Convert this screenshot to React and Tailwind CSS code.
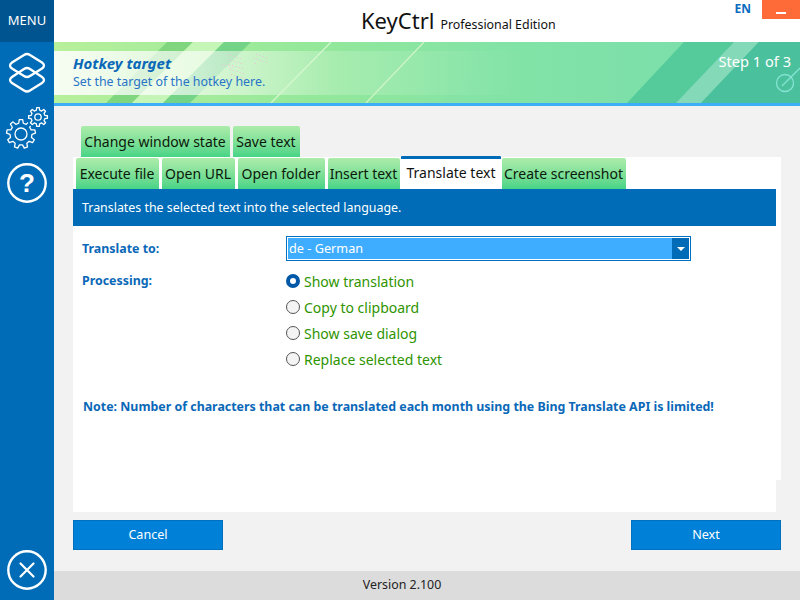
import React from "react";

const FONT = "font-['Noto_Sans','Open_Sans',sans-serif]";

function gearPath(cx, cy, ro, ri, teeth) {
  const pts = [];
  const step = (Math.PI * 2) / teeth;
  for (let i = 0; i < teeth; i++) {
    const a = i * step - Math.PI / 2;
    const w = step * 0.17;
    const v = step * 0.3;
    const p = (r, t) => `${(cx + r * Math.cos(t)).toFixed(2)} ${(cy + r * Math.sin(t)).toFixed(2)}`;
    pts.push(p(ri, a - v), p(ro, a - w), p(ro, a + w), p(ri, a + v));
  }
  return "M" + pts.join("L") + "Z";
}

function LayersIcon() {
  return (
    <svg width="54" height="50" viewBox="0 0 54 50" fill="none" stroke="#fff" strokeWidth="2.3" className="block">
      <path d="M24 3Q27 1 30 3L42 10.5Q46 13.5 42 16.5L30 24Q27 26 24 24L12 16.5Q8 13.5 12 10.5Z" />
      <path d="M24 17Q27 15 30 17L42 25Q46 28 42 31L30 38.5Q27 40.5 24 38.5L12 31Q8 28 12 25Z" />
    </svg>
  );
}

function GearsIcon() {
  return (
    <svg width="54" height="46" viewBox="0 0 54 46" fill="none" stroke="#fff" strokeWidth="1.3" strokeLinejoin="round" className="block">
      <path d={gearPath(21, 28, 14.5, 11, 9)} />
      <circle cx="21" cy="28" r="6" />
      <circle cx="38" cy="11" r="11.5" fill="#006cb7" stroke="none" />
      <path d={gearPath(38, 11, 9.5, 7, 8)} />
      <circle cx="38" cy="11" r="3.2" />
    </svg>
  );
}

function HelpIcon() {
  return (
    <svg width="54" height="42" viewBox="0 0 54 42" fill="none" className="block">
      <circle cx="27" cy="21" r="18.7" stroke="#fff" strokeWidth="2.4" />
      <text x="27" y="30" textAnchor="middle" fill="#fff" fontSize="26" fontWeight="700" fontFamily="Liberation Sans, sans-serif">?</text>
    </svg>
  );
}

function CloseIcon() {
  return (
    <svg width="54" height="42" viewBox="0 0 54 42" fill="none" className="block">
      <circle cx="27" cy="21" r="18.7" stroke="#fff" strokeWidth="2.4" />
      <path d="M20.5 14.5L33.5 27.5M33.5 14.5L20.5 27.5" stroke="#fff" strokeWidth="2.2" strokeLinecap="round" />
    </svg>
  );
}

function BannerArt() {
  const dots = [];
  for (let i = 0; i < 40; i++) {
    const x = 165 + ((i * 37) % 36) + (i % 5) * 3;
    const y = 12 + ((i * 53) % 26);
    dots.push(<rect key={i} x={x - (y - 12) * 0.8 + 8} y={y} width="1" height="1" fill="#f0bcdc" />);
  }
  return (
    <svg width="746" height="61" viewBox="0 0 746 61" className="absolute left-0 top-0">
      <defs>
        <linearGradient id="base" x1="0" x2="1" y1="0" y2="0">
          <stop offset="0" stopColor="#b8f09b" />
          <stop offset="0.35" stopColor="#93e89a" />
          <stop offset="0.65" stopColor="#7fe2a9" />
          <stop offset="0.85" stopColor="#74d9ae" />
          <stop offset="1" stopColor="#72d8ae" />
        </linearGradient>
        <linearGradient id="band" x1="0" x2="1" y1="0" y2="0">
          <stop offset="0" stopColor="#fff" stopOpacity="0.88" />
          <stop offset="0.3" stopColor="#fff" stopOpacity="0.62" />
          <stop offset="0.6" stopColor="#fff" stopOpacity="0.2" />
          <stop offset="1" stopColor="#fff" stopOpacity="0" />
        </linearGradient>
      </defs>
      <rect width="746" height="61" fill="url(#base)" />
      <path d="M113 0H139L78 61H52Z" fill="#7fd67f" />
      <path d="M139 0H170L109 61H78Z" fill="#c6f5b8" />
      <path d="M170 0H197L136 61H109Z" fill="#73d488" />
      <path d="M445 0L386 61H746V0Z" fill="#84e4a6" opacity="0.5" />
      <path d="M630 0H746V61H573Z" fill="#55cb9c" />
      <path d="M680 0H705L647 61H622Z" fill="#84d9b8" />
      <path d="M705 0H746V61H647Z" fill="#4ac09c" />
      <rect y="9" width="470" height="44" fill="url(#band)" />
      <path d="M277 0L217 61" stroke="#d8f8d0" strokeWidth="1.2" />
      <path d="M370 0L312 61" stroke="#d2f5c8" strokeWidth="1.2" />
      {dots}
      <circle cx="731" cy="41" r="8.5" fill="none" stroke="#86e3d3" strokeWidth="1.3" />
      <path d="M728 44L746 26" stroke="#86e3d3" strokeWidth="1.3" />
    </svg>
  );
}

function Tab({ w, children, active }) {
  if (active) {
    return (
      <div className={`${w} h-[33px] pb-[3px] bg-white border-t-[3px] border-[#006cb7] flex items-center justify-center text-[14px] text-[#111] rounded-t-[1px] whitespace-nowrap`}>
        {children}
      </div>
    );
  }
  return (
    <div className={`${w} h-[31px] pr-[1px] bg-gradient-to-b from-[#acecaa] to-[#45d487] flex items-center justify-center text-[14px] text-[#0a1a0a] rounded-t-[2px] whitespace-nowrap`}>
      {children}
    </div>
  );
}

function Radio({ checked, label }) {
  return (
    <div className="flex items-center h-[26px]">
      {checked ? (
        <span className="w-[14px] h-[14px] rounded-full border-[4px] border-[#0058a8] bg-white shrink-0" />
      ) : (
        <span className="w-[14px] h-[14px] rounded-full border border-[#555] bg-[#f4f4f4] shrink-0" />
      )}
      <span className="ml-[4px] text-[14px] text-[#2f9400] whitespace-nowrap">{label}</span>
    </div>
  );
}

export default function App() {
  return (
    <div className={`${FONT} w-[800px] h-[600px] flex overflow-hidden bg-[#f2f2f2]`}>
      <aside className="w-[54px] h-full bg-[#006cb7] flex flex-col text-white shrink-0">
        <div className="h-[42px] bg-[#00548f] flex items-center justify-center text-[13px]">MENU</div>
        <div className="mt-[10px]"><LayersIcon /></div>
        <div className="mt-[4px]"><GearsIcon /></div>
        <div className="mt-[10px]"><HelpIcon /></div>
        <div className="mt-auto mb-[9px]"><CloseIcon /></div>
      </aside>

      <main className="flex-1 flex flex-col min-w-0">
        <header className="h-[42px] bg-white flex items-start relative">
          <div className="flex-1 flex items-baseline pl-[307px] pt-[3px]">
            <span className="text-[22px] leading-[34px] text-[#111]">KeyCtrl</span>
            <span className="ml-[6px] text-[12.4px] text-[#111]">Professional Edition</span>
          </div>
          <span className="mt-[1px] mr-[11px] text-[12px] font-bold text-[#0a6cc0] leading-[16px]">EN</span>
          <div className="w-[38px] h-[19px] bg-[#ff6a39] flex items-end justify-center pb-[5px]">
            <span className="w-[10px] h-[2px] bg-white" />
          </div>
        </header>

        <section className="h-[64px] relative border-b-[3px] border-[#3dadf5] shrink-0">
          <BannerArt />
          <div className="relative flex justify-between pl-[19px] pr-[9px]">
            <div className="pt-[11px]">
              <div className="text-[15px] leading-[20px] font-bold italic text-[#0a68b8]">Hotkey target</div>
              <div className="text-[12.4px] leading-[18px] text-[#2a74c8]">Set the target of the hotkey here.</div>
            </div>
            <div className="pt-[9px] text-[14.6px] leading-[20px] text-white">Step 1 of 3</div>
          </div>
        </section>

        <div className="flex-1 pl-[19px] pt-[20px] flex flex-col">
          <div className="flex gap-[3px] pl-[8px] h-[31px]">
            <Tab w="w-[149px]">Change window state</Tab>
            <Tab w="w-[67px]">Save text</Tab>
          </div>
          <div className="w-[708px] h-[323px] bg-white relative">
            <div className="flex items-end h-[32px] pl-[3px]">
              <Tab w="w-[83px] mr-[3px]">Execute file</Tab>
              <Tab w="w-[73px] mr-[3px]">Open URL</Tab>
              <Tab w="w-[87px] mr-[3px]">Open folder</Tab>
              <Tab w="w-[72px] mr-[1px]">Insert text</Tab>
              <Tab w="w-[100px] mr-[1px]" active>Translate text</Tab>
              <Tab w="w-[124px]">Create screenshot</Tab>
            </div>
            <div className="w-[703px] h-[37px] bg-[#006cb7] flex items-center pl-[9px] pt-[1px] text-[12.4px] text-white">
              Translates the selected text into the selected language.
            </div>
            <div className="flex pl-[9px] pt-[10px]">
              <div className="w-[204px] text-[12.4px] font-bold text-[#0a68b8]">
                <div className="h-[25px] pt-[1px] flex items-center">Translate to:</div>
                <div className="mt-[8px] h-[25px] flex items-center">Processing:</div>
              </div>
              <div className="flex-1">
                <div className="w-[405px] h-[25px] border border-[#0070c0] p-[1px] bg-white">
                  <div className="h-full bg-[#3fadff] flex items-center justify-between text-[12.7px] text-white pl-[1px]">
                    <span>de - German</span>
                    <span className="w-[17px] h-full bg-[#006cb7] flex items-center justify-center">
                      <span className="w-0 h-0 border-x-[4px] border-x-transparent border-t-[4px] border-t-white" />
                    </span>
                  </div>
                </div>
                <div className="mt-[7px]">
                  <Radio checked label="Show translation" />
                  <Radio label="Copy to clipboard" />
                  <Radio label="Show save dialog" />
                  <Radio label="Replace selected text" />
                </div>
              </div>
            </div>
            <div className="pl-[10px] mt-[26px] text-[12.4px] font-bold text-[#0a68b8] whitespace-nowrap">
              Note: Number of characters that can be translated each month using the Bing Translate API is limited!
            </div>
          </div>
          <div className="w-[703px] h-[32px] bg-white" />
          <div className="mt-[8px] w-[708px] flex justify-between">
            <button className="w-[150px] h-[30px] bg-[#0180d8] border border-[#0070c0] text-[12.6px] text-white">Cancel</button>
            <button className="w-[150px] h-[30px] bg-[#0180d8] border border-[#0070c0] text-[12.6px] text-white">Next</button>
          </div>
        </div>

        <footer className="h-[29px] bg-[#dcdcdc] flex items-center justify-center pr-[50px] text-[12.4px] text-[#222] shrink-0">
          Version 2.100
        </footer>
      </main>
    </div>
  );
}
